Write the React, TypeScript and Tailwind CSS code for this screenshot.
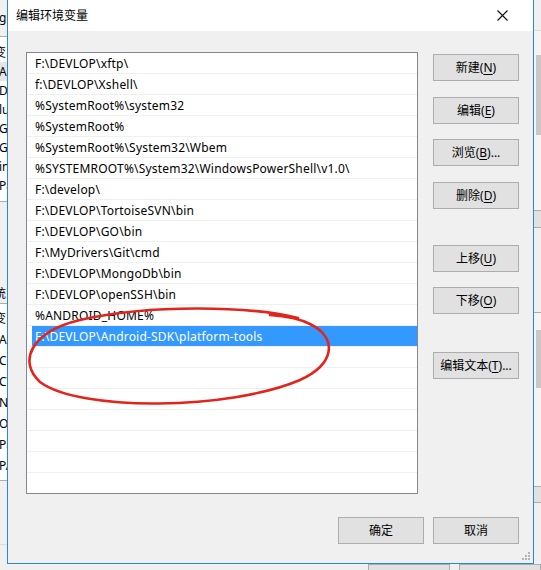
import React from "react";

const paths = [
  "F:\\DEVLOP\\xftp\\",
  "f:\\DEVLOP\\Xshell\\",
  "%SystemRoot%\\system32",
  "%SystemRoot%",
  "%SystemRoot%\\System32\\Wbem",
  "%SYSTEMROOT%\\System32\\WindowsPowerShell\\v1.0\\",
  "F:\\develop\\",
  "F:\\DEVLOP\\TortoiseSVN\\bin",
  "F:\\DEVLOP\\GO\\bin",
  "F:\\MyDrivers\\Git\\cmd",
  "F:\\DEVLOP\\MongoDb\\bin",
  "F:\\DEVLOP\\openSSH\\bin",
  "%ANDROID_HOME%",
  "F:\\DEVLOP\\Android-SDK\\platform-tools",
];

const selected = 13;

const WinButton: React.FC<{ label: string; mnemonic?: string; suffix?: string; className?: string }> = ({
  label,
  mnemonic,
  suffix = "",
  className = "",
}) => (
  <div
    className={`h-[27px] w-[86px] flex items-center justify-center bg-[#e1e1e1] border border-[#adadad] text-black leading-[16px] ${className}`}
  >
    <span>
      {label}
      {mnemonic && (
        <>
          (<span className="underline underline-offset-2">{mnemonic}</span>)
        </>
      )}
      {suffix}
    </span>
  </div>
);

// edge of the 环境变量 window behind the dialog
const LeftStrip: React.FC = () => (
  <div className="w-[7px] h-full overflow-hidden bg-[#f0f0f0] flex flex-col text-[12px] leading-none whitespace-nowrap">
    <div className="h-[36px] flex items-center ml-[-1px]">g</div>
    <div className="h-[166px] bg-white border-y border-[#adadad] flex flex-col pt-[6px]">
      <div className="h-[19px] flex items-center ml-[-6px]">变</div>
      <div className="h-[19px] flex items-center ml-[-1px] bg-[#e5e5e5]">Al</div>
      <div className="h-[19px] flex items-center ml-[-1px]">Da</div>
      <div className="h-[19px] flex items-center ml-[-1px]">lu</div>
      <div className="h-[19px] flex items-center ml-[-1px]">Go</div>
      <div className="h-[19px] flex items-center ml-[-1px]">Gi</div>
      <div className="h-[19px] flex items-center ml-[-1px]">in</div>
      <div className="h-[19px] flex items-center ml-[-1px]">Pa</div>
    </div>
    <div className="h-[83px]" />
    <div className="h-[18px] flex items-center ml-[-6px]">统</div>
    <div className="h-[178px] bg-white border-y border-[#adadad] flex flex-col pt-[4px]">
      <div className="h-[21px] flex items-center ml-[-6px]">变</div>
      <div className="h-[21px] flex items-center ml-[-1px]">Al</div>
      <div className="h-[21px] flex items-center ml-[-1px]">Co</div>
      <div className="h-[21px] flex items-center ml-[-1px]">CY</div>
      <div className="h-[21px] flex items-center ml-[-1px]">N</div>
      <div className="h-[21px] flex items-center ml-[-1px]">O</div>
      <div className="h-[21px] flex items-center ml-[-1px]">Pa</div>
      <div className="h-[21px] flex items-center ml-[-1px]">PA</div>
    </div>
    <div className="h-[64px] border-b border-[#dcdcdc]" />
  </div>
);

const RightStrip: React.FC = () => (
  <div className="w-[7px] h-full overflow-hidden bg-[#f0f0f0] flex flex-col">
    <div className="h-[31px] border-b border-[#dadada]" />
    <div className="h-[179px] flex flex-col items-end bg-[#f4f4f4]">
      <div className="mt-[24px] h-[80px] w-[5px] bg-[#c8c8c8]" />
    </div>
    <div className="h-[18px] border-y border-[#adadad] bg-[#e1e1e1]" />
    <div className="h-[84px]" />
    <div className="h-[174px] border-t border-[#adadad] flex flex-col items-end bg-[#f4f4f4]">
      <div className="mt-[17px] h-[58px] w-[5px] bg-[#c8c8c8]" />
    </div>
    <div className="h-[17px] border-y border-[#adadad] bg-[#e1e1e1]" />
  </div>
);

const Dialog: React.FC = () => (
  <div className="relative w-[527px] h-[564px] flex flex-col border-x border-b border-[#2b87d3] bg-[#f0f0f0]">
    <div className="h-[31px] bg-white flex items-center justify-between pl-[8px]">
      <span className="text-black">编辑环境变量</span>
      <div className="w-[46px] h-[31px] mr-[8px] flex items-center justify-center">
        <svg width="11" height="11" viewBox="0 0 11 11">
          <path d="M0.5 0.5 L10.5 10.5 M10.5 0.5 L0.5 10.5" stroke="#111" strokeWidth="1.1" />
        </svg>
      </div>
    </div>
    <div className="flex-1 flex flex-col pt-[21px] pl-[18px] pr-[14px]">
      <div className="flex">
        <div className="w-[392px] h-[442px] bg-white border border-[#828790] overflow-hidden">
          {Array.from({ length: 22 }).map((_, i) => {
            const text = paths[i];
            const sel = i === selected;
            return (
              <div key={i} className="h-[21px] border-b border-[#f0f0f0] pl-[5px]">
                <div
                  className={`h-[20px] flex items-center pt-[1px] pl-[3px] whitespace-nowrap leading-[16px] tracking-[0.2px] ${
                    sel ? "bg-[#3399ff] text-white" : "text-black"
                  }`}
                >
                  {text ?? ""}
                </div>
              </div>
            );
          })}
        </div>
        <div className="ml-[15px] flex flex-col">
          <WinButton label="新建" mnemonic="N" className="mt-[2px]" />
          <WinButton label="编辑" mnemonic="E" className="mt-[16px]" />
          <WinButton label="浏览" mnemonic="B" suffix="..." className="mt-[15px]" />
          <WinButton label="删除" mnemonic="D" className="mt-[16px]" />
          <WinButton label="上移" mnemonic="U" className="mt-[36px]" />
          <WinButton label="下移" mnemonic="O" className="mt-[15px]" />
          <WinButton label="编辑文本" mnemonic="T" suffix="..." className="mt-[38px]" />
        </div>
      </div>
      <div className="flex justify-end gap-[9px] mt-[23px]">
        <WinButton label="确定" />
        <WinButton label="取消" />
      </div>
    </div>
    <svg className="absolute right-[2px] bottom-[2px]" width="10" height="10" viewBox="0 0 10 10">
      <g fill="#b4b4b4">
        <rect x="7" y="1" width="2" height="2" />
        <rect x="4" y="4" width="2" height="2" />
        <rect x="7" y="4" width="2" height="2" />
        <rect x="1" y="7" width="2" height="2" />
        <rect x="4" y="7" width="2" height="2" />
        <rect x="7" y="7" width="2" height="2" />
      </g>
    </svg>
  </div>
);

export default function App() {
  return (
    <div className="relative w-[541px] h-[570px] overflow-hidden bg-[#f0f0f0] font-['Noto_Sans','Noto_Sans_CJK_SC',sans-serif] text-[12px]">
      <div className="flex h-[564px]">
        <LeftStrip />
        <Dialog />
        <RightStrip />
      </div>
      <div className="h-[6px] flex bg-[#f0f0f0]">
        <div className="ml-[368px] w-[86px] h-full bg-[#e1e1e1] border-x border-t border-[#adadad]" />
        <div className="ml-[9px] w-[86px] h-full bg-[#e1e1e1] border-x border-t border-[#adadad]" />
      </div>
      {/* hand-drawn red annotation */}
      <svg className="absolute inset-0 pointer-events-none" width="541" height="570" viewBox="0 0 541 570">
        <path
          d="M298 318 C 250 306, 150 304, 80 320 C 30 332, 18 362, 40 382 C 80 412, 230 410, 300 380 C 335 364, 338 338, 310 324 C 300 319, 285 316, 270 315"
          fill="none"
          stroke="#e3241d"
          strokeWidth="2.6"
          strokeLinecap="round"
        />
      </svg>
    </div>
  );
}
